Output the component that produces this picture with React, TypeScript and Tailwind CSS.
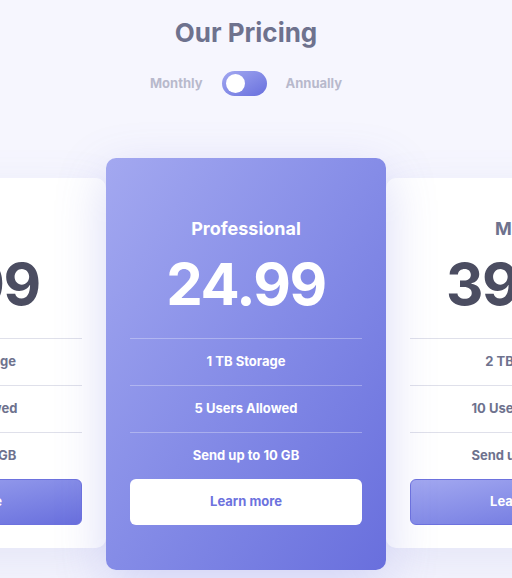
import React from 'react';

type Plan = {
  name: string;
  price: string;
  features: string[];
  featured?: boolean;
};

const plans: Plan[] = [
  { name: 'Basic', price: '19.99', features: ['500 GB Storage', '2 Users Allowed', 'Send up to 3 GB'] },
  { name: 'Professional', price: '24.99', features: ['1 TB Storage', '5 Users Allowed', 'Send up to 10 GB'], featured: true },
  { name: 'Master', price: '39.99', features: ['2 TB Storage', '10 Users Allowed', 'Send up to 20 GB'] },
];

const PricingCard: React.FC<{ plan: Plan }> = ({ plan }) => {
  const f = plan.featured;
  return (
    <div
      className={
        f
          ? 'z-10 flex w-[280px] shrink-0 flex-col rounded-[10px] bg-gradient-to-br from-[#a3a8f0] to-[#696fdd] px-6 pt-[60px] pb-[45px] text-white shadow-[0_16px_50px_rgba(98,104,220,0.25)]'
          : 'mt-5 flex h-[370px] w-[280px] shrink-0 flex-col rounded-[10px] bg-white px-6 pt-[40px] shadow-[0_16px_50px_rgba(110,114,200,0.12)]'
      }
    >
      <h3 className={`text-center text-[18px] font-bold leading-[22px] ${f ? 'text-white' : 'text-[#6e728e]'}`}>
        {plan.name}
      </h3>
      <p
        className={`mt-[12px] text-center text-[58px] font-bold leading-[64px] tracking-[-1.5px] ${
          f ? 'text-white' : 'text-[#4b4d61]'
        }`}
      >
        {plan.price}
      </p>
      <ul className="mt-[22px]">
        {plan.features.map((item) => (
          <li
            key={item}
            className={`flex h-[47px] items-center justify-center border-t text-[13px] font-bold ${
              f ? 'border-white/30 text-white' : 'border-[#dfe0ea] text-[#6e728e]'
            }`}
          >
            {item}
          </li>
        ))}
      </ul>
      <button
        className={
          f
            ? 'h-[46px] rounded-[6px] bg-white text-[13px] font-bold text-[#6d72de]'
            : 'h-[46px] rounded-[6px] border border-[#6d72de] bg-gradient-to-br from-[#a3a8f0] to-[#696fdd] text-[13px] font-bold text-white'
        }
      >
        Learn more
      </button>
    </div>
  );
};

export default function App() {
  return (
    <div className="min-h-[578px] overflow-hidden bg-[#f6f6fe] font-['Inter','Liberation_Sans',sans-serif]">
      <div className="flex flex-col items-center pr-5">
        <h1 className="mt-[17px] text-[26px] font-bold leading-[32px] text-[#6e728e]">Our Pricing</h1>
        <div className="mt-[22px] flex items-center gap-[19px] text-[13px] font-bold text-[#b8b9cc]">
          <span>Monthly</span>
          <button className="flex h-[25px] w-[45px] items-center rounded-full bg-gradient-to-br from-[#a3a8f0] to-[#696fdd] px-[4px]">
            <span className="h-[19px] w-[19px] rounded-full bg-white" />
          </button>
          <span>Annually</span>
        </div>
        <div className="mt-[62px] flex w-[840px] shrink-0 items-start justify-center">
          {plans.map((p) => (
            <PricingCard key={p.name} plan={p} />
          ))}
        </div>
      </div>
    </div>
  );
}
